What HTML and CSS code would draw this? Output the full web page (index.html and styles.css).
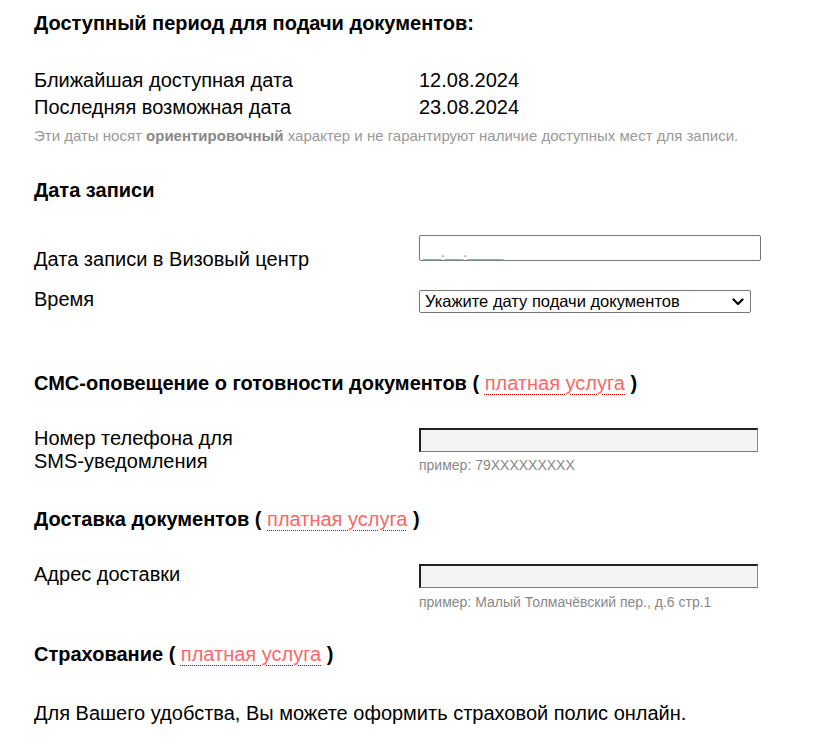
FILE: index.html
```html
<!DOCTYPE html>
<html lang="ru">
<head>
<meta charset="utf-8">
<title>Запись</title>
<link rel="stylesheet" href="styles.css">
</head>
<body>
<div class="page">
  <h2 class="heading heading-first">Доступный период для подачи документов:</h2>
  <div class="dates">
    <div class="date-row"><span class="date-label">Ближайшая доступная дата</span><span>12.08.2024</span></div>
    <div class="date-row"><span class="date-label">Последняя возможная дата</span><span>23.08.2024</span></div>
  </div>
  <p class="note">Эти даты носят <b>ориентировочный</b> характер и не гарантируют наличие доступных мест для записи.</p>

  <h2 class="heading h-date">Дата записи</h2>
  <div class="form-row row-date">
    <label class="label label-date">Дата записи в Визовый центр</label>
    <div class="field"><div class="date-input"><span class="mask">__.__.____</span></div></div>
  </div>
  <div class="form-row row-time">
    <label class="label">Время</label>
    <div class="field">
      <div class="select">
        <span>Укажите дату подачи документов</span>
        <svg class="chev" width="12" height="8" viewBox="0 0 12 8"><path d="M1.5 1.5 L6 6 L10.5 1.5" fill="none" stroke="#000" stroke-width="2.2" stroke-linecap="round" stroke-linejoin="round"/></svg>
      </div>
    </div>
  </div>

  <h2 class="heading h-sms">СМС-оповещение о готовности документов ( <a class="paid">платная услуга</a> )</h2>
  <div class="form-row row-phone">
    <label class="label label-multi">Номер телефона для<br>SMS-уведомления</label>
    <div class="field">
      <div class="grey-input"></div>
      <div class="hint">пример: 79XXXXXXXXX</div>
    </div>
  </div>

  <h2 class="heading h-delivery">Доставка документов ( <a class="paid">платная услуга</a> )</h2>
  <div class="form-row row-address">
    <label class="label label-multi">Адрес доставки</label>
    <div class="field">
      <div class="grey-input"></div>
      <div class="hint hint-addr">пример: Малый Толмачёвский пер., д.6 стр.1</div>
    </div>
  </div>

  <h2 class="heading h-ins">Страхование ( <a class="paid">платная услуга</a> )</h2>
  <p class="text">Для Вашего удобства, Вы можете оформить страховой полис онлайн.</p>
</div>
</body>
</html>
```

FILE: styles.css
```css
html, body {
  margin: 0;
  padding: 0;
  background: #fff;
}
body {
  font-family: "Liberation Sans", Arial, sans-serif;
  color: #000;
  font-size: 20px;
  line-height: 27px;
}
.page {
  padding: 10px 0 20px 34px;
}
.heading {
  font-size: 20px;
  font-weight: bold;
  line-height: 27px;
  margin: 0;
}
.heading-first { margin-top: 0; }
.dates { margin-top: 30px; }
.date-row {
  display: grid;
  grid-template-columns: 385px auto;
}
.note {
  margin: 6px 0 0;
  font-size: 15px;
  line-height: 18px;
  color: #999;
}
.note b { color: #888; }
.h-date { margin-top: 32px; }
.form-row {
  display: grid;
  grid-template-columns: 385px auto;
  align-items: start;
}
.row-date { margin-top: 31px; }
.label-date { padding-top: 11px; }
.date-input {
  width: 340px;
  height: 24px;
  border: 1px solid #767676;
  border-radius: 2px;
  background: #fff;
  box-sizing: content-box;
  position: relative;
}
.mask {
  position: absolute;
  left: 3px;
  bottom: -1px;
  font-size: 16px;
  line-height: 18px;
  color: #9aa;
}
.row-time { margin-top: 13px; }
.row-time .field { padding-top: 4px; }
.select {
  height: 21px;
  border: 1px solid #767676;
  border-radius: 2px;
  display: flex;
  align-items: center;
  justify-content: space-between;
  padding: 0 6px 0 5px;
  box-sizing: content-box;
  font-size: 16.5px;
  line-height: 21px;
  width: 319px;
}
.chev { display: block; }
.h-sms { margin-top: 57px; }
.paid {
  font-weight: normal;
  color: #f66;
  text-decoration: underline dotted #d00;
  text-underline-offset: 4px;
  text-decoration-thickness: 1px;
}
.label-multi { line-height: 23px; }
.row-phone { margin-top: 30px; }
.row-phone .field, .row-address .field { padding-top: 1px; }
.grey-input {
  width: 336px;
  height: 21px;
  background: #f3f3f3;
  border-style: solid;
  border-width: 2px 1px 1px 2px;
  border-color: #222 #888 #777 #222;
}
.hint {
  margin-top: 5px;
  font-size: 14px;
  line-height: 16px;
  color: #888;
}
.hint-addr { margin-top: 6px; }
.h-delivery { margin-top: 33px; }
.row-address { margin-top: 30px; }
.h-ins { margin-top: 31px; }
.text {
  margin: 32px 0 0;
}
```
